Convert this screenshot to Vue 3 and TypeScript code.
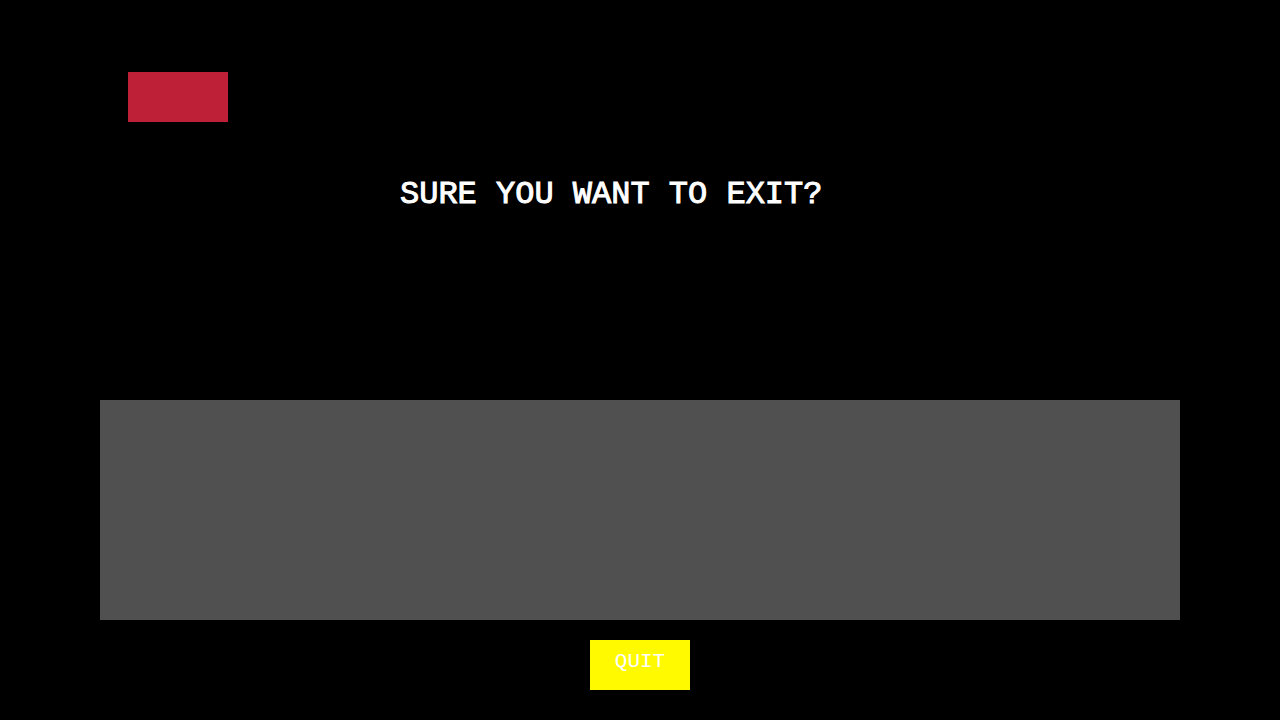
<script setup lang="ts">
const question: string = 'SURE YOU WANT TO EXIT?'
const quitLabel: string = 'QUIT'
</script>

<template>
  <main class="screen">
    <div class="marker"></div>
    <h1 class="question">{{ question }}</h1>
    <section class="panel"></section>
    <button class="quit" type="button">{{ quitLabel }}</button>
  </main>
</template>

<style>
html,
body {
  background: #000;
}

body {
  margin: 0;
}
</style>

<style scoped>
.screen {
  box-sizing: border-box;
  display: flex;
  flex-direction: column;
  min-height: 100vh;
  padding: 72px 100px 30px;
  background: #000;
  color: #fff;
  font-family: "Liberation Mono", "DejaVu Sans Mono", monospace;
}

.marker {
  width: 100px;
  height: 50px;
  margin-left: 28px;
  background: #be2137;
}

.question {
  margin: 53px 0 0 300px;
  font-size: 32px;
  font-weight: 400;
  line-height: 40px;
  -webkit-text-stroke: 1px #fff;
}

.panel {
  flex: 1;
  min-height: 220px;
  margin-top: 185px;
  background: #505050;
}

.quit {
  align-self: center;
  width: 100px;
  height: 50px;
  margin-top: 20px;
  padding: 0 0 6px;
  border: 0;
  background: #fffa00;
  color: #fff;
  font-family: inherit;
  font-size: 21px;
  line-height: 24px;
  cursor: pointer;
}
</style>
